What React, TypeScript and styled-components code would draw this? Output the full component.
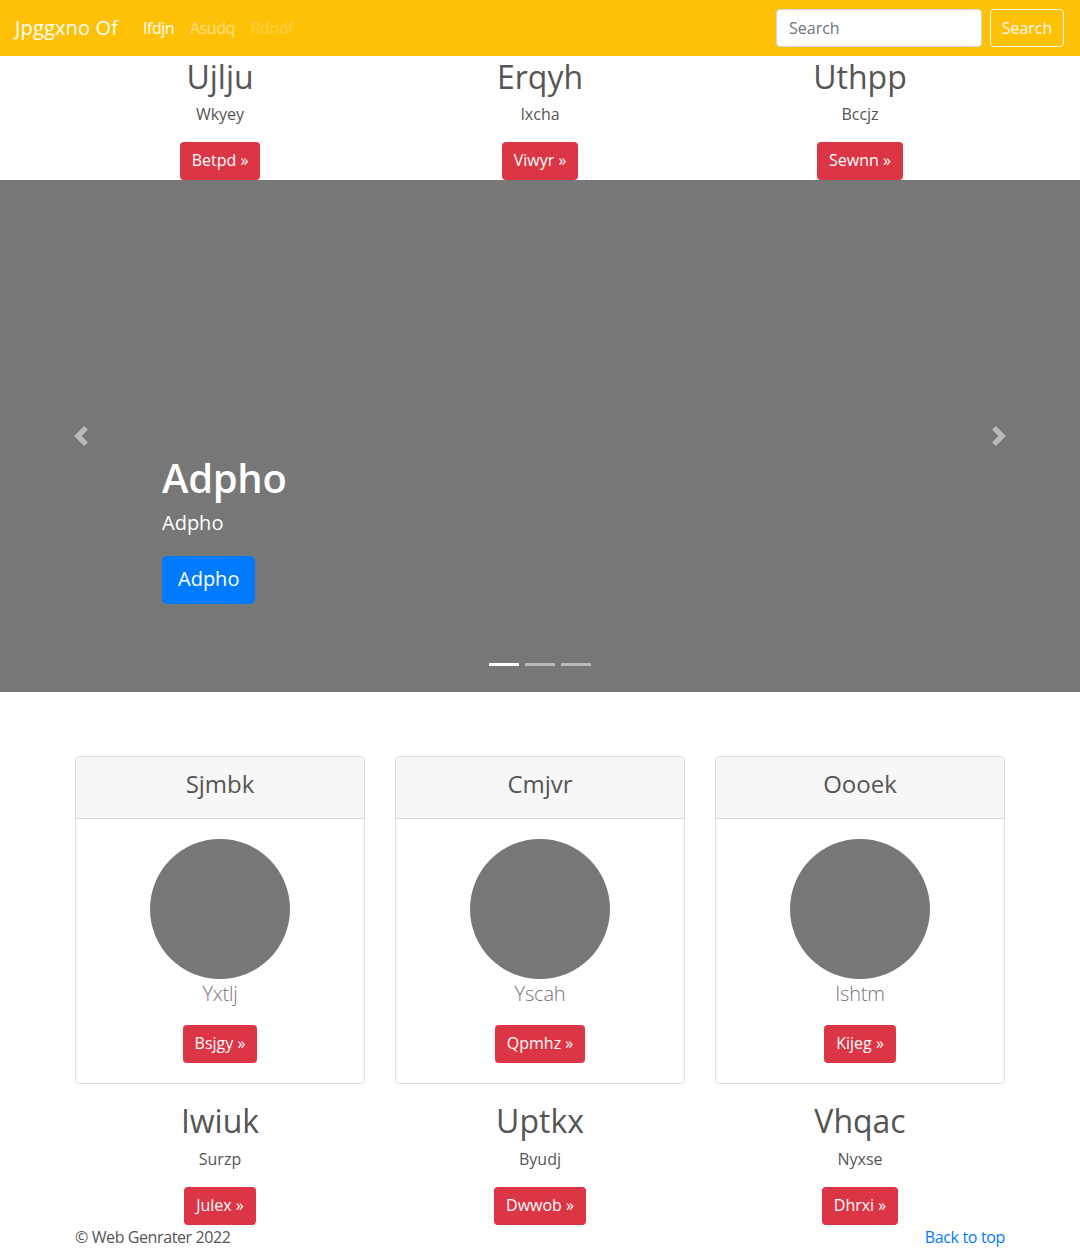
import React from "react";
import styled, { createGlobalStyle } from "styled-components";

const GlobalStyle = createGlobalStyle`
  * { box-sizing: border-box; }
  body {
    margin: 0;
    font-family: "Open Sans", "Noto Sans", sans-serif;
    font-size: 16px;
    line-height: 1.5;
    color: #555;
    background: #fff;
  }
`;

const Navbar = styled.header`
  height: 56px;
  background: #ffc107;
  display: flex;
  align-items: center;
  justify-content: space-between;
  padding: 8px 16px 8px 15px;
`;

const Left = styled.div`
  display: flex;
  align-items: center;
`;

const Brand = styled.a`
  font-size: 20px;
  line-height: 30px;
  color: #fff;
  margin-right: 17px;
  text-decoration: none;
  letter-spacing: 0.15px;
`;

const NavList = styled.nav`
  display: flex;
`;

const NavLink = styled.a<{ $tone: "active" | "normal" | "disabled" }>`
  padding: 8px 8px;
  line-height: 24px;
  text-decoration: none;
  letter-spacing: -0.5px;
  color: ${(p) =>
    p.$tone === "active"
      ? "#fff"
      : p.$tone === "normal"
      ? "rgba(255,255,255,0.5)"
      : "rgba(255,255,255,0.25)"};
`;

const SearchForm = styled.form`
  display: flex;
  align-items: center;
  gap: 8px;
`;

const SearchInput = styled.input`
  width: 206px;
  height: 38px;
  padding: 6px 12px;
  font-family: inherit;
  font-size: 16px;
  color: #495057;
  border: 1px solid #ced4da;
  border-radius: 4px;
  background: #fff;
  outline: none;
  &::placeholder { color: #6c757d; }
`;

const OutlineButton = styled.button`
  width: 74px;
  height: 38px;
  padding: 6px 0;
  font-family: inherit;
  font-size: 16px;
  line-height: 24px;
  color: #f8f9fa;
  background: transparent;
  border: 1px solid #f8f9fa;
  border-radius: 4px;
`;

const Container = styled.div`
  width: 930px;
  margin: 0 auto;
`;

const Row = styled.div`
  display: grid;
  grid-template-columns: repeat(3, 1fr);
  column-gap: 30px;
`;

const Feature = styled.div`
  text-align: center;
`;

const FeatureTitle = styled.h2`
  margin: 0 0 6px;
  padding-top: 2px;
  font-size: 32px;
  line-height: 38.4px;
  font-weight: 500;
`;

const FeatureText = styled.p`
  margin: 0 0 16px;
  line-height: 24px;
`;

const RedButton = styled.a`
  display: inline-block;
  height: 38px;
  padding: 6px 12px;
  font-size: 16px;
  line-height: 24px;
  color: #fff;
  background: #dc3545;
  border-radius: 4px;
  text-decoration: none;
`;

const Carousel = styled.section`
  position: relative;
  height: 512px;
  background: #777;
  margin-bottom: 64px;
`;

const Control = styled.a<{ $side: "left" | "right" }>`
  position: absolute;
  top: 0;
  bottom: 0;
  ${(p) => (p.$side === "left" ? "left: 0;" : "right: 0;")}
  width: 15%;
  display: flex;
  align-items: center;
  justify-content: center;
  opacity: 0.5;
`;

const Caption = styled.div`
  position: absolute;
  left: 15%;
  right: 15%;
  bottom: 48px;
  padding: 20px 0;
  color: #fff;
  text-align: left;
`;

const CaptionTitle = styled.h1`
  margin: 0 0 6px;
  font-size: 40px;
  line-height: 48px;
  font-weight: 600;
  letter-spacing: -0.3px;
`;

const CaptionText = styled.p`
  margin: 0 0 18px;
  font-size: 20px;
  line-height: 30px;
`;

const CaptionAction = styled.p`
  margin: 0 0 20px;
  line-height: 48px;
  height: 48px;
`;

const BigBlueButton = styled.a`
  display: inline-block;
  height: 48px;
  padding: 8px 16px;
  font-size: 20px;
  line-height: 30px;
  color: #fff;
  background: #007bff;
  border-radius: 5px;
  text-decoration: none;
  vertical-align: top;
`;

const Indicators = styled.ol`
  position: absolute;
  left: 0;
  right: 0;
  bottom: 26px;
  margin: 0;
  padding: 0;
  list-style: none;
  display: flex;
  justify-content: center;
  gap: 6px;
`;

const Indicator = styled.li<{ $active?: boolean }>`
  width: 30px;
  height: 3px;
  background: ${(p) => (p.$active ? "#fff" : "rgba(255,255,255,0.5)")};
`;

const Card = styled.div`
  border: 1px solid rgba(0, 0, 0, 0.125);
  border-radius: 4px;
  text-align: center;
  margin-bottom: 16px;
  overflow: hidden;
`;

const CardHeader = styled.div`
  background: #f7f7f7;
  border-bottom: 1px solid rgba(0, 0, 0, 0.125);
  padding: 13px 20px 11px;
`;

const CardTitle = styled.h4`
  margin: 0 0 8px;
  font-size: 24px;
  line-height: 28.8px;
  font-weight: 500;
`;

const CardBody = styled.div`
  padding: 20px;
  display: flex;
  flex-direction: column;
  align-items: center;
`;

const Avatar = styled.div`
  width: 140px;
  height: 140px;
  border-radius: 50%;
  background: #777;
`;

const MutedLead = styled.p`
  margin: 0 0 16px;
  font-size: 20px;
  line-height: 30px;
  font-weight: 300;
  color: #7d6f82;
  letter-spacing: -0.2px;
`;

const Footer = styled.footer`
  display: flex;
  justify-content: space-between;
  line-height: 24px;
`;

const FooterText = styled.p`
  margin: 0;
  letter-spacing: -0.4px;
`;

const TopLink = styled.a`
  color: #007bff;
  text-decoration: none;
  letter-spacing: -0.35px;
`;

const Chevron = ({ dir }: { dir: "left" | "right" }) => (
  <svg width="20" height="20" viewBox="0 0 8 8" fill="#fff">
    {dir === "left" ? (
      <path d="M5.25 0l-4 4 4 4 1.5-1.5L4.25 4l2.5-2.5L5.25 0z" />
    ) : (
      <path d="M2.75 0l-1.5 1.5L3.75 4l-2.5 2.5L2.75 8l4-4-4-4z" />
    )}
  </svg>
);

const topFeatures = [
  { t: "Ujlju", s: "Wkyey", b: "Betpd" },
  { t: "Erqyh", s: "Ixcha", b: "Viwyr" },
  { t: "Uthpp", s: "Bccjz", b: "Sewnn" },
];

const cards = [
  { t: "Sjmbk", s: "Yxtlj", b: "Bsjgy" },
  { t: "Cmjvr", s: "Yscah", b: "Qpmhz" },
  { t: "Oooek", s: "Ishtm", b: "Kijeg" },
];

const bottomFeatures = [
  { t: "Iwiuk", s: "Surzp", b: "Julex" },
  { t: "Uptkx", s: "Byudj", b: "Dwwob" },
  { t: "Vhqac", s: "Nyxse", b: "Dhrxi" },
];

export default function App() {
  return (
    <>
      <GlobalStyle />
      <Navbar>
        <Left>
          <Brand href="#">Jpggxno Of</Brand>
          <NavList>
            <NavLink $tone="active" href="#">Ifdjn</NavLink>
            <NavLink $tone="normal" href="#">Asudq</NavLink>
            <NavLink $tone="disabled" href="#">Rdndf</NavLink>
          </NavList>
        </Left>
        <SearchForm onSubmit={(e) => e.preventDefault()}>
          <SearchInput placeholder="Search" />
          <OutlineButton type="submit">Search</OutlineButton>
        </SearchForm>
      </Navbar>

      <Container>
        <Row>
          {topFeatures.map((f) => (
            <Feature key={f.t}>
              <FeatureTitle>{f.t}</FeatureTitle>
              <FeatureText>{f.s}</FeatureText>
              <RedButton href="#">{f.b} »</RedButton>
            </Feature>
          ))}
        </Row>
      </Container>

      <Carousel>
        <Control $side="left" href="#">
          <Chevron dir="left" />
        </Control>
        <Caption>
          <CaptionTitle>Adpho</CaptionTitle>
          <CaptionText>Adpho</CaptionText>
          <CaptionAction>
            <BigBlueButton href="#">Adpho</BigBlueButton>
          </CaptionAction>
        </Caption>
        <Control $side="right" href="#">
          <Chevron dir="right" />
        </Control>
        <Indicators>
          <Indicator $active />
          <Indicator />
          <Indicator />
        </Indicators>
      </Carousel>

      <Container>
        <Row>
          {cards.map((c) => (
            <Card key={c.t}>
              <CardHeader>
                <CardTitle>{c.t}</CardTitle>
              </CardHeader>
              <CardBody>
                <Avatar />
                <MutedLead>{c.s}</MutedLead>
                <RedButton href="#">{c.b} »</RedButton>
              </CardBody>
            </Card>
          ))}
        </Row>
        <Row>
          {bottomFeatures.map((f) => (
            <Feature key={f.t}>
              <FeatureTitle>{f.t}</FeatureTitle>
              <FeatureText>{f.s}</FeatureText>
              <RedButton href="#">{f.b} »</RedButton>
            </Feature>
          ))}
        </Row>
        <Footer>
          <FooterText>© Web Genrater 2022</FooterText>
          <TopLink href="#">Back to top</TopLink>
        </Footer>
      </Container>
    </>
  );
}
